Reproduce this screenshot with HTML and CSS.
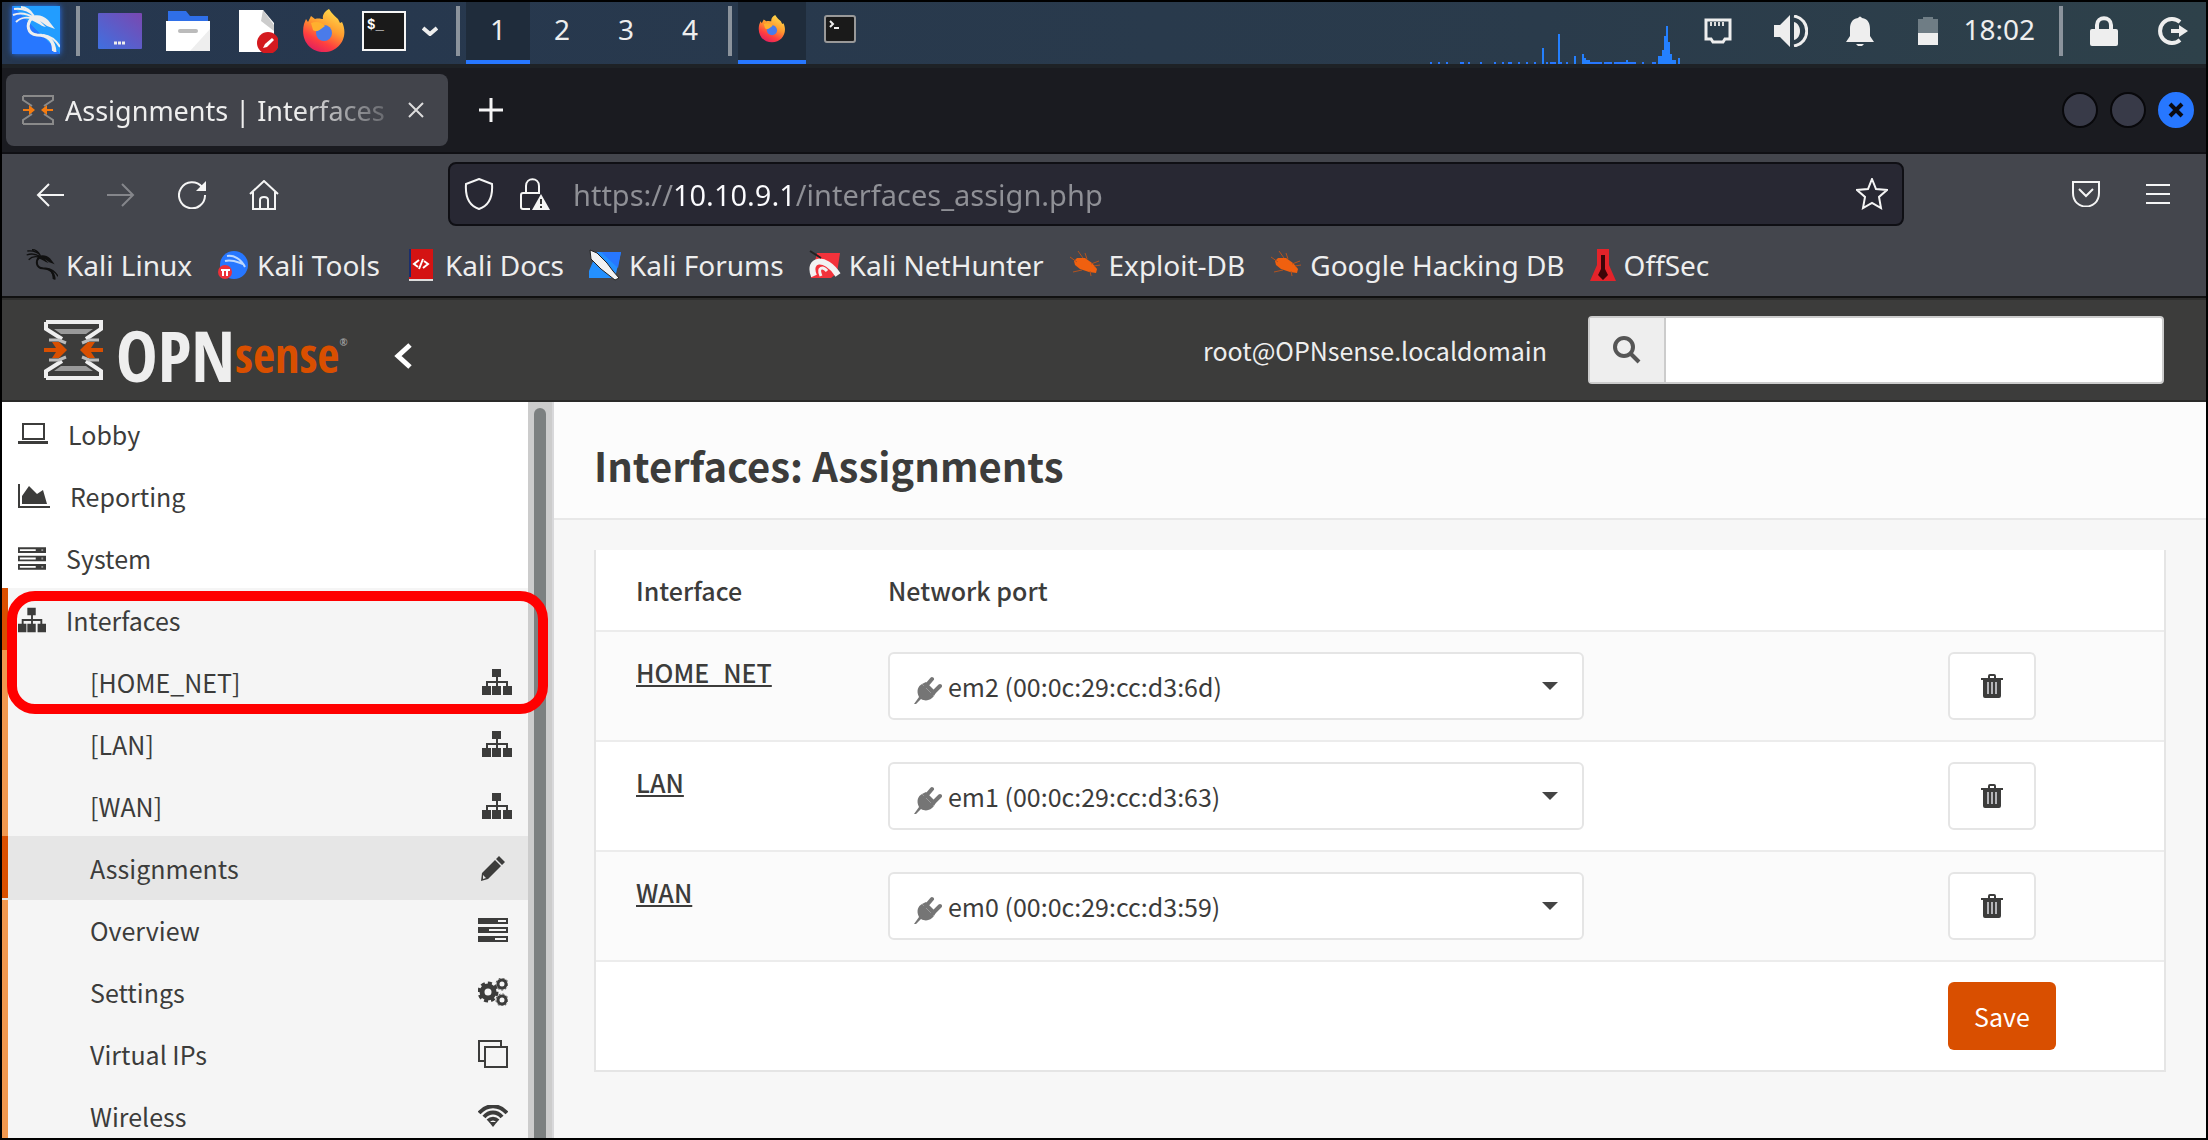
FILE: index.html
```html
<!DOCTYPE html>
<html lang="en">
<head>
<meta charset="utf-8">
<title>Assignments | Interfaces | OPNsense</title>
<link rel="stylesheet" href="styles.css">
</head>
<body>
<svg class="defs" aria-hidden="true">
  <defs>
    <linearGradient id="g-fox" x1="0.8" y1="0" x2="0.3" y2="1"><stop offset="0" stop-color="#ffe24f"/><stop offset=".45" stop-color="#ff9a2e"/><stop offset=".75" stop-color="#ff3f3f"/><stop offset="1" stop-color="#e01e60"/></linearGradient>
    <linearGradient id="g-desk" x1="0" y1="1" x2="1" y2="0"><stop offset="0" stop-color="#3f70e0"/><stop offset="1" stop-color="#7a48b0"/></linearGradient>
    <linearGradient id="g-kali" x1="0" y1="1" x2="1" y2="0"><stop offset=".5" stop-color="#2777ff"/><stop offset=".5" stop-color="#229dff"/></linearGradient>
    <symbol id="dragon" viewBox="0 0 48 48">
      <path d="M2 3C10 2 17 4 22 10M1 9C9 6 16 8 22 12M4 16C9 11 16 11 21 13M9 1C14 1 19 5 21 9" fill="none" stroke="currentColor" stroke-width="2"/>
      <path d="M20 12C14 18 15 28 25 29C34 29 42 33 43 46" fill="none" stroke="currentColor" stroke-width="3"/>
      <path d="M31 29C38 30 44 34 48 41M36 32C40 35 41 39 41 45" fill="none" stroke="currentColor" stroke-width="2"/>
      <path d="M18 11C24 8 31 9 36 14L43 23L35 20L28 15L34 21C28 20 24 15 18 14Z" fill="currentColor"/>
    </symbol>
    <symbol id="fox" viewBox="0 0 44 44">
      <path d="M27 0C30 5 33 7 36 10L38 14L40 13C47 27 38 43 22 43C8 43-2 31 2 15L4 10L6 13L9 7L13 10C17 9 19 10 21 10C20 6 23 2 27 0Z" fill="url(#g-fox)"/>
      <circle cx="22" cy="24" r="8" fill="#4a7bea"/>
      <path d="M9 14C14 12 20 13 23 17L19 20C17 22 13 23 11 21Z" fill="#ffb02e"/>
    </symbol>
    <symbol id="sitemap" viewBox="0 0 30 26">
      <path d="M10 0h9v8h-3v4h10v5h4v9h-9v-9h3v-3H16v3h3v9h-9v-9h4v-3H6v3h3v9H0v-9h4v-5h10V8h-4z" fill="currentColor"/>
    </symbol>
    <symbol id="server" viewBox="0 0 30 24">
      <path d="M0 0h30v6H0zM0 9h30v6H0zM0 18h30v6H0z" fill="currentColor"/>
      <path d="M2 2h17v2H2zM2 11h17v2H2zM2 20h17v2H2z" fill="#fff"/><path d="M25 2h2v2h-2zM25 11h2v2h-2zM25 20h2v2h-2z" fill="#999"/>
    </symbol>
    <symbol id="tasks" viewBox="0 0 30 24">
      <path d="M0 0h30v6H0zM0 9h30v6H0zM0 18h30v6H0z" fill="currentColor"/>
      <path d="M20 2h8v2h-8zM11 11h17v2H11zM17 20h11v2H17z" fill="#f5f5f5"/>
    </symbol>
    <symbol id="plug" viewBox="0 0 28 28">
      <path d="M0 28L5 21C2 15 4 10 8 8L20 20C17 24 12 26 7 23L2 28Z" fill="currentColor"/>
      <path d="M12 10L18 3M19 17L26 10" stroke="currentColor" stroke-width="4" stroke-linecap="round"/><path d="M8 8L12 6L22 16L20 20Z" fill="currentColor"/>
    </symbol>
    <symbol id="trash" viewBox="0 0 24 24">
      <path d="M8 2Q8 0 10 0h4q2 0 2 2v2h7v2h-2v16q0 2-2 2H5q-2 0-2-2V6H1V4h7zM10 2v2h4V2z" fill="currentColor"/>
      <path d="M8 8v12M12 8v12M16 8v12" stroke="#b4b4b8" stroke-width="2"/>
    </symbol>
    <symbol id="bug" viewBox="0 0 32 32">
      <path d="M5 12L8 9L16 9L23 14L28 20L27 24L20 23L11 20L6 16Z" fill="#f0600f"/>
      <path d="M1 8L8 13M9 2L14 9M16 4L18 10M30 12L22 15M31 16L25 17M4 23L13 21M21 22L22 27" stroke="#b3531f" stroke-width="1"/>
    </symbol>
    <symbol id="hourglass" viewBox="0 0 60 60">
      <path d="M2 2H57V9L42 19M2 2V9L18 19M2 58H57V51L42 41M2 58V51L18 41" fill="none" stroke="#eee" stroke-width="4"/>
      <path d="M10 9H49L42 14H17ZM10 51H49L42 46H17Z" fill="#999"/>
      <path d="M5 20H15L22 23M55 20H45L38 23M5 40H15L22 37M55 40H45L38 37" fill="none" stroke="#bbb" stroke-width="3"/>
      <path d="M0 28H12L8 22H15L23 30L15 38H8L12 32H0ZM59 28H47L51 22H44L36 30L44 38H51L47 32H59Z" fill="#d94f00"/>
    </symbol>
  </defs>
</svg>

<header class="panel">
  <button class="plain kali" aria-label="Applications"><svg width="48" height="48" viewBox="0 0 48 48"><rect width="48" height="48" fill="url(#g-kali)"/><use href="#dragon"/></svg></button>
  <span class="sep"></span>
  <div class="launchers">
    <button class="plain" aria-label="Show desktop"><svg width="44" height="44" viewBox="0 0 44 44"><rect y="4" width="44" height="36" rx="1" fill="url(#g-desk)"/><path d="M16 34h12" stroke="#eee" stroke-width="3" stroke-dasharray="3 1"/></svg></button>
    <button class="plain" aria-label="Files"><svg width="44" height="44" viewBox="0 0 44 44"><path d="M2 14V2H20L24 7H42V14Z" fill="#2f6fe8"/><rect y="12" width="44" height="30" fill="#fff"/><path d="M44 20V42H24Z" fill="#eee"/><rect x="12" y="20" width="20" height="4" rx="2" fill="#bbb"/></svg></button>
    <button class="plain" aria-label="Text editor"><svg width="44" height="44" viewBox="0 0 44 44"><path d="M5 1H29L40 14V43H5Z" fill="#fff"/><path d="M29 1L40 16V22L27 12Z" fill="#ccc"/><circle cx="34" cy="34" r="11" fill="#d41a1f"/><path d="M29 39L31 35L38 29L40 31L33 38Z" fill="#fff"/></svg></button>
    <button class="plain" aria-label="Firefox"><svg width="44" height="44"><use href="#fox"/></svg></button>
  </div>
  <div class="term">
    <button class="plain" aria-label="Terminal"><svg width="44" height="40" viewBox="0 0 44 40"><rect x="1" y="1" width="42" height="38" fill="#1a1a1a" stroke="#f5f5f5" stroke-width="2"/><text x="5" y="18" class="prompt">$_</text></svg></button>
    <button class="plain" aria-label="More terminals"><svg width="16" height="10" viewBox="0 0 16 10"><path d="M1 2L8 8L15 2" fill="none" stroke="#eee" stroke-width="4"/></svg></button>
  </div>
  <span class="sep"></span>
  <nav class="spaces" aria-label="Workspaces">
    <button class="space on">1</button><button class="space">2</button><button class="space">3</button><button class="space">4</button>
  </nav>
  <span class="sep"></span>
  <div class="windows">
    <button class="win on" aria-label="Firefox window"><svg width="28" height="28"><use href="#fox"/></svg></button>
    <button class="win" aria-label="Terminal window"><svg width="32" height="28" viewBox="0 0 32 28"><rect x="1" y="1" width="30" height="26" rx="2" fill="#1a1a1a" stroke="#999" stroke-width="2"/><path d="M6 6L9 9L6 12M10 13H15" stroke="#eee" stroke-width="2" fill="none"/></svg></button>
  </div>
  <div class="tray">
    <svg class="graph" width="250" height="62" viewBox="0 0 250 62"><path d="M0 61h2M8 61h2M16 61h2M30 61h4M38 61h2M50 61h2M64 61h2M72 61h2M78 61h4M88 61h2M96 61h2M104 61h2M116 61h2M120 61h6M130 61h2M136 61h2M158 61h14M174 61h8M184 61h22M212 61h2M222 61h4" stroke="#2777ff" stroke-width="2"/><path d="M112 62V46h2V62ZM128 62V32h2V62ZM144 62V54h2V62ZM152 62V52h2v4h2v2h4V62ZM196 62V58h2V62ZM228 62V54h4v-6h2V34h2V24h2V40h2V52h2v6h4V62ZM248 62V56h2V62Z" fill="#2480ff"/></svg>
    <button class="plain" aria-label="Network"><svg width="28" height="26" viewBox="0 0 28 26"><path d="M2 2H26V21H21L19 24H9L7 21H2Z" fill="none" stroke="#eee" stroke-width="3"/><path d="M6 6h16" stroke="#ddd" stroke-width="4" stroke-dasharray="2 2"/></svg></button>
    <button class="plain volume" aria-label="Volume"><svg width="34" height="32" viewBox="0 0 34 32"><path d="M0 10H6L16 0V32L6 22H0Z" fill="#eee"/><path d="M20 7C28 9 28 23 20 25Z" fill="#eee"/><path d="M20 1C37 4 37 28 20 31" fill="none" stroke="#eee" stroke-width="3"/></svg></button>
    <button class="plain bell" aria-label="Notifications"><svg width="28" height="30" viewBox="0 0 28 30"><path d="M12 2Q14-1 16 2C22 3 24 7 24 13V20L28 26H0L4 20V13C4 7 6 3 12 2ZM10 28H18L16 30H12Z" fill="#eee"/></svg></button>
    <button class="plain battery" aria-label="Battery"><svg width="20" height="28" viewBox="0 0 20 28"><path d="M0 2H5V0H15V2H20V16H0Z" fill="#6f7d85"/><path d="M0 16H20V28H0Z" fill="#eee"/></svg></button>
    <time class="clock">18:02</time>
    <span class="sep"></span>
    <button class="plain lock" aria-label="Lock"><svg width="28" height="30" viewBox="0 0 28 30"><path d="M7 14V9C7 0 21 0 21 9V14" fill="none" stroke="#eee" stroke-width="4"/><rect y="13" width="28" height="17" rx="2" fill="#eee"/></svg></button>
    <button class="plain logout" aria-label="Log out"><svg width="30" height="28" viewBox="0 0 30 28"><path d="M22 5A12 12 0 1 0 22 23" fill="none" stroke="#eee" stroke-width="4"/><path d="M13 12H21V8L30 14L21 20V16H13Z" fill="#eee"/></svg></button>
  </div>
</header>

<div class="tabs">
  <div class="tab">
    <svg width="32" height="32" viewBox="0 0 32 32"><path d="M1 2H31V6L22 12M1 2V6L10 12M1 30H31V26L22 20M1 30V26L10 20" fill="none" stroke="#8a8a8a" stroke-width="2"/><path d="M1 15H7V11L13 16L7 21V17H1ZM31 15H25V11L19 16L25 21V17H31Z" fill="#f57c10"/></svg>
    <span class="tab-title">Assignments | Interfaces |</span>
    <button class="plain" aria-label="Close tab"><svg width="16" height="16" viewBox="0 0 16 16"><path d="M1 1L15 15M15 1L1 15" stroke="#ddd" stroke-width="2"/></svg></button>
  </div>
  <button class="plain new" aria-label="New tab"><svg width="24" height="24" viewBox="0 0 24 24"><path d="M12 0V24M0 12H24" stroke="#f5f5f5" stroke-width="3"/></svg></button>
  <div class="controls">
    <button class="dot" aria-label="Minimise"></button><button class="dot" aria-label="Maximise"></button>
    <button class="dot close" aria-label="Close"><svg width="16" height="16" viewBox="0 0 16 16"><path d="M2 2L14 14M14 2L2 14" stroke="#0a0a12" stroke-width="4"/></svg></button>
  </div>
</div>

<div class="toolbar">
  <div class="navs">
    <button class="plain" aria-label="Back"><svg width="28" height="24" viewBox="0 0 28 24"><path d="M28 12H2M13 1L2 12L13 23" fill="none" stroke="#f5f5f5" stroke-width="2"/></svg></button>
    <button class="plain" aria-label="Forward" disabled><svg width="28" height="24" viewBox="0 0 28 24"><path d="M0 12H26M15 1L26 12L15 23" fill="none" stroke="#85868b" stroke-width="2"/></svg></button>
    <button class="plain" aria-label="Reload"><svg width="28" height="28" viewBox="0 0 28 28"><path d="M24 6A13 13 0 1 0 27 14" fill="none" stroke="#f5f5f5" stroke-width="2"/><path d="M28 0V10H18Z" fill="#f5f5f5"/></svg></button>
    <button class="plain" aria-label="Home"><svg width="30" height="30" viewBox="0 0 30 30"><path d="M1 14L15 1L29 14M4 12V29H26V12M11 29V20Q11 17 15 17T19 20V29" fill="none" stroke="#f5f5f5" stroke-width="2"/></svg></button>
  </div>
  <div class="urlbar">
    <svg width="30" height="32" viewBox="0 0 30 32"><path d="M15 1L28 6C29 20 24 28 15 31C6 28 1 20 2 6Z" fill="none" stroke="#f5f5f5" stroke-width="2"/></svg>
    <svg width="30" height="32" viewBox="0 0 30 32"><path d="M10 31H3Q1 31 1 29V17Q1 15 3 15H19M6 15V8C6-1 19-1 19 8V16" fill="none" stroke="#f5f5f5" stroke-width="2"/><path d="M21 16L30 32H12Z" fill="#f5f5f5"/><path d="M21 21v5M21 28v2" stroke="#333" stroke-width="2"/></svg>
    <input class="url" aria-label="Address" value="https://10.10.9.1/interfaces_assign.php">
    <button class="plain" aria-label="Bookmark"><svg width="32" height="32" viewBox="0 0 32 32"><path d="M16 1L20 11L31 12L23 19L25 30L16 25L7 30L9 19L1 12L12 11Z" fill="none" stroke="#f5f5f5" stroke-width="2"/></svg></button>
  </div>
  <div class="extras">
    <button class="plain" aria-label="Pocket"><svg width="28" height="26" viewBox="0 0 28 26"><path d="M1 1H27V12C27 30 1 30 1 12Z" fill="none" stroke="#f5f5f5" stroke-width="2"/><path d="M7 8L14 15L21 8" fill="none" stroke="#f5f5f5" stroke-width="2"/></svg></button>
    <button class="plain" aria-label="Menu"><svg width="24" height="20" viewBox="0 0 24 20"><path d="M0 1H24M0 10H24M0 19H24" stroke="#f5f5f5" stroke-width="2"/></svg></button>
  </div>
</div>

<nav class="bookmarks" aria-label="Bookmarks">
  <a href="#"><svg width="32" height="32" color="#101010"><use href="#dragon"/></svg>Kali Linux</a>
  <a href="#"><svg width="32" height="32" viewBox="0 0 32 32"><circle cx="17" cy="16" r="14" fill="#2777ff"/><path d="M10 7C17 6 24 10 28 18M8 12C15 10 20 13 26 15" stroke="#bcd8ff" stroke-width="2" fill="none"/><circle cx="8" cy="23" r="7" fill="#ee3038"/><path d="M4 21h9M6 21v6M10 21v6" stroke="#fff" stroke-width="2"/></svg>Kali Tools</a>
  <a href="#"><svg width="32" height="32" viewBox="0 0 32 32"><path d="M4 0H28V32H4Z" fill="#d41313"/><path d="M4 0H6V28H4Z" fill="#1b2f6d"/><path d="M4 30H28V32H4Z" fill="#ddd"/><path d="M14 11L9 15L13 18M19 12L23 15L18 19M18 10L14 20" stroke="#fff" stroke-width="2" fill="none"/></svg>Kali Docs</a>
  <a href="#"><svg width="32" height="32" viewBox="0 0 32 32"><path d="M8 3H32L26 29H0V22Z" fill="#2490ff"/><path d="M12 3H32L29 19Z" fill="#2777ff"/><path d="M1 1L8 4L18 14L24 22L30 29L26 31L12 20L2 10Z" fill="#f2f2f2" stroke="#222" stroke-width="1"/></svg>Kali Forums</a>
  <a href="#"><svg width="32" height="32" viewBox="0 0 32 32"><path d="M8 4H31L28 24L22 29H2Z" fill="#f3323b"/><path d="M5 27C-2 10 16 6 29 26" stroke="#f2f2f2" stroke-width="6" fill="none"/><path d="M12 27C8 18 14 17 18 22" stroke="#f2f2f2" stroke-width="3" fill="none"/><path d="M1 2L12 9" stroke="#222" stroke-width="2"/></svg>Kali NetHunter</a>
  <a href="#"><svg width="32" height="32"><use href="#bug"/></svg>Exploit-DB</a>
  <a href="#"><svg width="32" height="32"><use href="#bug"/></svg>Google Hacking DB</a>
  <a href="#"><svg width="26" height="32" viewBox="0 0 26 32"><path d="M7 0H19V16L26 32H0L7 16Z" fill="#e3232a"/><path d="M11 6H15V20L18 26L13 31L8 26L11 20Z" fill="#3c0508"/></svg>OffSec</a>
</nav>

<header class="masthead">
  <a class="brand" href="#" aria-label="OPNsense"><svg width="60" height="60"><use href="#hourglass"/></svg><span class="opn">OPN</span><span class="sense">sense</span><sup class="reg">®</sup></a>
  <button class="plain collapse" aria-label="Toggle sidebar"><svg width="18" height="26" viewBox="0 0 18 26"><path d="M16 2L4 13L16 24" fill="none" stroke="#fff" stroke-width="5"/></svg></button>
  <span class="user">root@OPNsense.localdomain</span>
  <form class="search">
    <label for="q"><svg width="28" height="28" viewBox="0 0 28 28"><circle cx="11" cy="11" r="9" fill="none" stroke="#555" stroke-width="4"/><path d="M18 18L26 26" stroke="#555" stroke-width="4"/></svg></label>
    <input id="q" type="text" aria-label="Search">
  </form>
</header>

<div class="body">
  <aside class="side">
    <nav class="menu">
      <a href="#"><svg width="30" height="22" viewBox="0 0 30 22"><path d="M5 1H26V16H5Z" fill="none" stroke="currentColor" stroke-width="2"/><path d="M0 18h30v3H0z" fill="currentColor"/></svg>Lobby</a>
      <a href="#"><svg width="32" height="24" viewBox="0 0 32 24"><path d="M1 0V23H32" fill="none" stroke="currentColor" stroke-width="2"/><path d="M4 20V12L11 2L19 10L25 6L29 20Z" fill="currentColor"/></svg>Reporting</a>
      <a href="#"><svg width="28" height="23"><use href="#server"/></svg>System</a>
      <a href="#" class="open"><svg width="28" height="26"><use href="#sitemap"/></svg>Interfaces</a>
      <div class="sub">
        <a href="#">[HOME_NET]<svg class="end" width="30" height="26"><use href="#sitemap"/></svg></a>
        <a href="#">[LAN]<svg class="end" width="30" height="26"><use href="#sitemap"/></svg></a>
        <a href="#">[WAN]<svg class="end" width="30" height="26"><use href="#sitemap"/></svg></a>
        <a href="#" class="current" aria-current="page">Assignments<svg width="26" height="26" viewBox="0 0 26 26"><path d="M19 1L25 7L22 10L16 4ZM15 5L21 11L8 24L1 26L2 18ZM3 20L3 24L6 23Z" fill="currentColor"/></svg></a>
        <a href="#">Overview<svg width="30" height="24"><use href="#tasks"/></svg></a>
        <a href="#">Settings<svg width="30" height="28" viewBox="0 0 30 28"><circle cx="10" cy="14" r="6" fill="none" stroke="currentColor" stroke-width="5"/><circle cx="10" cy="14" r="9" fill="none" stroke="currentColor" stroke-width="3" stroke-dasharray="4 3"/><circle cx="24" cy="6" r="4" fill="none" stroke="currentColor" stroke-width="3"/><circle cx="24" cy="22" r="4" fill="none" stroke="currentColor" stroke-width="3"/><circle cx="24" cy="6" r="6" fill="none" stroke="currentColor" stroke-dasharray="2 2"/><circle cx="24" cy="22" r="6" fill="none" stroke="currentColor" stroke-dasharray="2 2"/></svg></a>
        <a href="#">Virtual IPs<svg width="30" height="28" viewBox="0 0 30 28"><path d="M7 21H1V1H23V7M7 7H29V27H7Z" fill="none" stroke="currentColor" stroke-width="2"/></svg></a>
        <a href="#">Wireless<svg width="30" height="22" viewBox="0 0 30 22"><path d="M1 8C9-1 21-1 29 8M6 12C11 6 19 6 24 12M10 16C13 13 17 13 20 16" fill="none" stroke="currentColor" stroke-width="4"/><path d="M11 17H19L15 22Z" fill="currentColor"/></svg></a>
      </div>
    </nav>
    <div class="track"><div class="thumb"></div></div>
    <div class="marker"></div>
  </aside>
  <main class="content">
    <div class="heading"><h1>Interfaces: Assignments</h1></div>
    <table class="grid">
      <thead><tr><th class="c1">Interface</th><th>Network port</th><th class="c3"></th></tr></thead>
      <tbody>
        <tr><td><a href="#">HOME_NET</a></td><td><div class="pick"><svg class="plug" width="28" height="28"><use href="#plug"/></svg><select aria-label="HOME_NET port"><option>em2 (00:0c:29:cc:d3:6d)</option></select><svg class="caret" width="16" height="8" viewBox="0 0 16 8"><path d="M0 0H16L8 8Z" fill="#444"/></svg></div></td><td><button class="del" aria-label="Delete HOME_NET"><svg width="24" height="24"><use href="#trash"/></svg></button></td></tr>
        <tr><td><a href="#">LAN</a></td><td><div class="pick"><svg class="plug" width="28" height="28"><use href="#plug"/></svg><select aria-label="LAN port"><option>em1 (00:0c:29:cc:d3:63)</option></select><svg class="caret" width="16" height="8" viewBox="0 0 16 8"><path d="M0 0H16L8 8Z" fill="#444"/></svg></div></td><td><button class="del" aria-label="Delete LAN"><svg width="24" height="24"><use href="#trash"/></svg></button></td></tr>
        <tr><td><a href="#">WAN</a></td><td><div class="pick"><svg class="plug" width="28" height="28"><use href="#plug"/></svg><select aria-label="WAN port"><option>em0 (00:0c:29:cc:d3:59)</option></select><svg class="caret" width="16" height="8" viewBox="0 0 16 8"><path d="M0 0H16L8 8Z" fill="#444"/></svg></div></td><td><button class="del" aria-label="Delete WAN"><svg width="24" height="24"><use href="#trash"/></svg></button></td></tr>
        <tr><td></td><td></td><td><button class="save">Save</button></td></tr>
      </tbody>
    </table>
  </main>
</div>
</body>
</html>
```
FILE: styles.css
```css
* { box-sizing: border-box; }
body {
  margin: 0;
  height: 100vh;
  border: 2px solid #000;
  display: flex;
  flex-direction: column;
  overflow: hidden;
  font-family: "Noto Sans", sans-serif;
  font-size: 28px;
  color: #eee;
}
svg { display: block; flex: none; }
.defs { position: absolute; width: 0; height: 0; }
button, input, select { font: inherit; color: inherit; }
a { color: inherit; text-decoration: none; }
.plain { padding: 0; border: 0; background: none; }

/* desktop panel */
.panel {
  flex: none;
  display: flex;
  align-items: center;
  height: 62px;
  padding-left: 10px;
  background: linear-gradient(90deg, #26374f, #2a3b4b 70%, #2e414a);
}
.kali { align-self: flex-start; margin-top: 4px; box-shadow: 0 0 6px #2777ff; }
.sep { width: 4px; height: 50px; margin: 0 6px 4px; background: #8b939c; }
.kali + .sep { margin: 0 18px 4px 16px; }
.launchers { display: flex; gap: 24px; padding-bottom: 4px; }
.term { display: flex; align-items: center; gap: 16px; margin: 0 12px 4px 16px; }
.prompt { font: bold 14px "Liberation Mono", monospace; fill: #fff; }
.spaces, .windows { display: flex; align-self: stretch; }
.space, .win {
  width: 64px;
  padding: 0 0 6px;
  border: 0;
  border-top: 2px solid transparent;
  border-bottom: 4px solid transparent;
  background: none;
}
.space { line-height: 36px; }
.win { width: 68px; display: grid; place-items: center; }
.on { background: #1f2c3b; border-bottom-color: #2777ff; border-top-color: #1f2c3b; }
.tray { display: flex; align-items: center; align-self: stretch; margin-left: auto; padding: 0 18px 4px 0; }
.graph { margin: 4px 24px 0 0; }
.tray .plain { margin-right: 42px; }
.tray .volume { margin-right: 38px; }
.tray .bell { margin-right: 44px; }
.tray .battery { margin-right: 25px; }
.tray .lock { margin-right: 40px; }
.tray .logout { margin-right: 0; }
.tray .sep { margin: 0 27px 0 24px; }
.clock { line-height: 36px; padding-bottom: 4px; }

/* browser chrome */
.tabs {
  flex: none;
  display: flex;
  align-items: center;
  height: 90px;
  padding: 0 12px 0 4px;
  border-top: 4px solid #1e2226;
  border-bottom: 2px solid #101014;
  background: #1a1b20;
}
.tab {
  display: flex;
  align-items: center;
  width: 442px;
  height: 72px;
  padding: 0 24px 0 16px;
  border-radius: 8px;
  background: #42444b;
}
.tab-title {
  flex: 1;
  min-width: 0;
  margin: 0 14px 0 11px;
  font-size: 27px;
  white-space: nowrap;
  -webkit-mask-image: linear-gradient(90deg, #000 70%, transparent 105%);
  mask-image: linear-gradient(90deg, #000 70%, transparent 105%);
}
.new { margin-left: 31px; }
.controls { display: flex; gap: 12px; margin-left: auto; }
.dot {
  display: grid;
  place-items: center;
  width: 36px;
  height: 36px;
  padding: 0;
  border: 2px solid #08080b;
  border-radius: 50%;
  background: #383a48;
}
.close { border-color: #2777ff; background: #2777ff; }
.toolbar { flex: none; display: flex; align-items: center; padding: 8px 36px 0 34px; background: #44464d; }
.navs { display: flex; align-items: center; gap: 43px; width: 412px; padding-top: 2px; }
.urlbar {
  flex: 1;
  display: flex;
  align-items: center;
  height: 64px;
  padding: 0 14px;
  border: 2px solid #0f0f14;
  border-radius: 8px;
  background: #282833;
}
.urlbar svg + svg { margin: 0 23px 0 26px; }
.url {
  flex: 1;
  min-width: 0;
  padding: 0;
  border: 0;
  outline: 0;
  font-size: 29px;
  color: transparent;
  background: linear-gradient(90deg, #8f9096 101px, #fbfbfe 101px 219px, #8f9096 219px);
  -webkit-background-clip: text;
  background-clip: text;
}
.extras { display: flex; align-items: center; justify-content: space-between; width: 98px; margin-left: 168px; }
.bookmarks {
  flex: none;
  display: flex;
  gap: 25px;
  height: 72px;
  padding: 0 24px;
  border-bottom: 2px solid #111;
  background: #44464d;
}
.bookmarks a { display: flex; align-items: center; gap: 8px; height: 78px; white-space: nowrap; }

/* firewall web interface */
.masthead, .body { font-family: "Noto Sans CJK JP", "Noto Sans CJK SC", sans-serif; font-size: 25px; }
.masthead {
  flex: none;
  display: flex;
  align-items: center;
  height: 104px;
  padding: 0 42px;
  border-top: 2px solid #2e2e2d;
  border-bottom: 2px solid #2a2a29;
  background: #3c3c3b;
}
.brand {
  display: flex;
  align-items: flex-end;
  width: 300px;
  height: 60px;
  font-family: "Noto Sans ExtraCondensed", "Open Sans Condensed", "Roboto Condensed", "Liberation Sans Narrow", "Liberation Sans", sans-serif;
  line-height: 50px;
}
.opn { margin-left: 12px; font-size: 70px; font-weight: 300; color: #eee; }
.sense { font-size: 48px; font-weight: 700; color: #d94f00; }
.reg { align-self: flex-start; font-size: 10px; line-height: 44px; color: #999; }
.collapse { margin: 12px 0 0 50px; }
.user { margin-left: auto; }
.search { display: flex; width: 576px; height: 68px; margin-left: 41px; border: 2px solid #ccc; border-radius: 4px; background: #fff; }
.search label { display: grid; place-items: center; width: 76px; border-right: 2px solid #ccc; background: #eee; }
.search input { flex: 1; min-width: 0; border: 0; background: none; color: #3c3c3b; }

.body { flex: 1; min-height: 0; display: flex; color: #3c3c3b; background: #f7f7f7; }
.side { position: relative; flex: none; display: flex; width: 552px; overflow: hidden; background: #fff; border-right: 2px solid #d8d8da; }
.menu { flex: 1; }
.menu a { display: flex; align-items: center; gap: 20px; height: 62px; padding: 2px 16px 0 10px; border-left: 6px solid transparent; }
.menu .open { border-color: #d94f00; background: #f5f5f5; }
.menu .sub a { justify-content: space-between; padding-left: 82px; padding-right: 20px; border-color: #f0984f; background: #f5f5f5; }
.menu .sub .current { padding-right: 22px; border-color: #d94f00; background: #e6e6e6; box-shadow: 0 2px #e6e6e6; position: relative; }
.menu .end { margin-right: -4px; }
.track { width: 24px; padding: 6px 6px 0; background: #ccc; }
.thumb { height: 100%; border-radius: 6px 6px 0 0; background: #7c8080; }
.marker { position: absolute; left: 5px; top: 189px; width: 541px; height: 123px; border: 10px solid #f00; border-radius: 28px; }

.content { flex: 1; }
.heading { height: 118px; padding: 0 40px; border-bottom: 2px solid #e8e8e8; background: #fcfcfc; }
h1 { margin: 0; font-size: 40px; font-weight: 700; line-height: 126px; }
.grid {
  width: calc(100% - 80px);
  margin: 30px 40px 0;
  border-collapse: separate;
  border-spacing: 0;
  table-layout: fixed;
  border: 2px solid #e5e5e5;
  border-top: 0;
  background: #fff;
}
.grid th, .grid td { padding: 20px 0 20px 40px; text-align: left; vertical-align: top; line-height: 40px; font-weight: 500; }
.grid td { border-top: 2px solid #ececec; }
.grid tbody tr:nth-child(odd) td { background: #fbfbfb; }
.grid .c1 { width: 252px; }
.grid .c3 { width: 256px; }
.grid td a { text-decoration: underline; }
.pick { position: relative; width: 696px; max-width: 100%; }
.pick select {
  display: block;
  width: 100%;
  height: 68px;
  padding: 0 58px;
  border: 2px solid #e5e5e5;
  border-radius: 6px;
  background: #fff;
  font-weight: 400;
  appearance: none;
}
.plug { position: absolute; left: 26px; top: 24px; color: #757575; }
.caret { position: absolute; right: 26px; top: 30px; }
.del { display: grid; place-items: center; width: 88px; height: 68px; padding: 0; border: 2px solid #e5e5e5; border-radius: 6px; background: #fff; color: #3c3c3b; }
.save { display: block; width: 108px; height: 68px; padding: 0; border: 0; border-radius: 6px; background: #d94f00; color: #fff; font-weight: 400; }
.grid tbody tr:last-child td { background: #fff; }
```
